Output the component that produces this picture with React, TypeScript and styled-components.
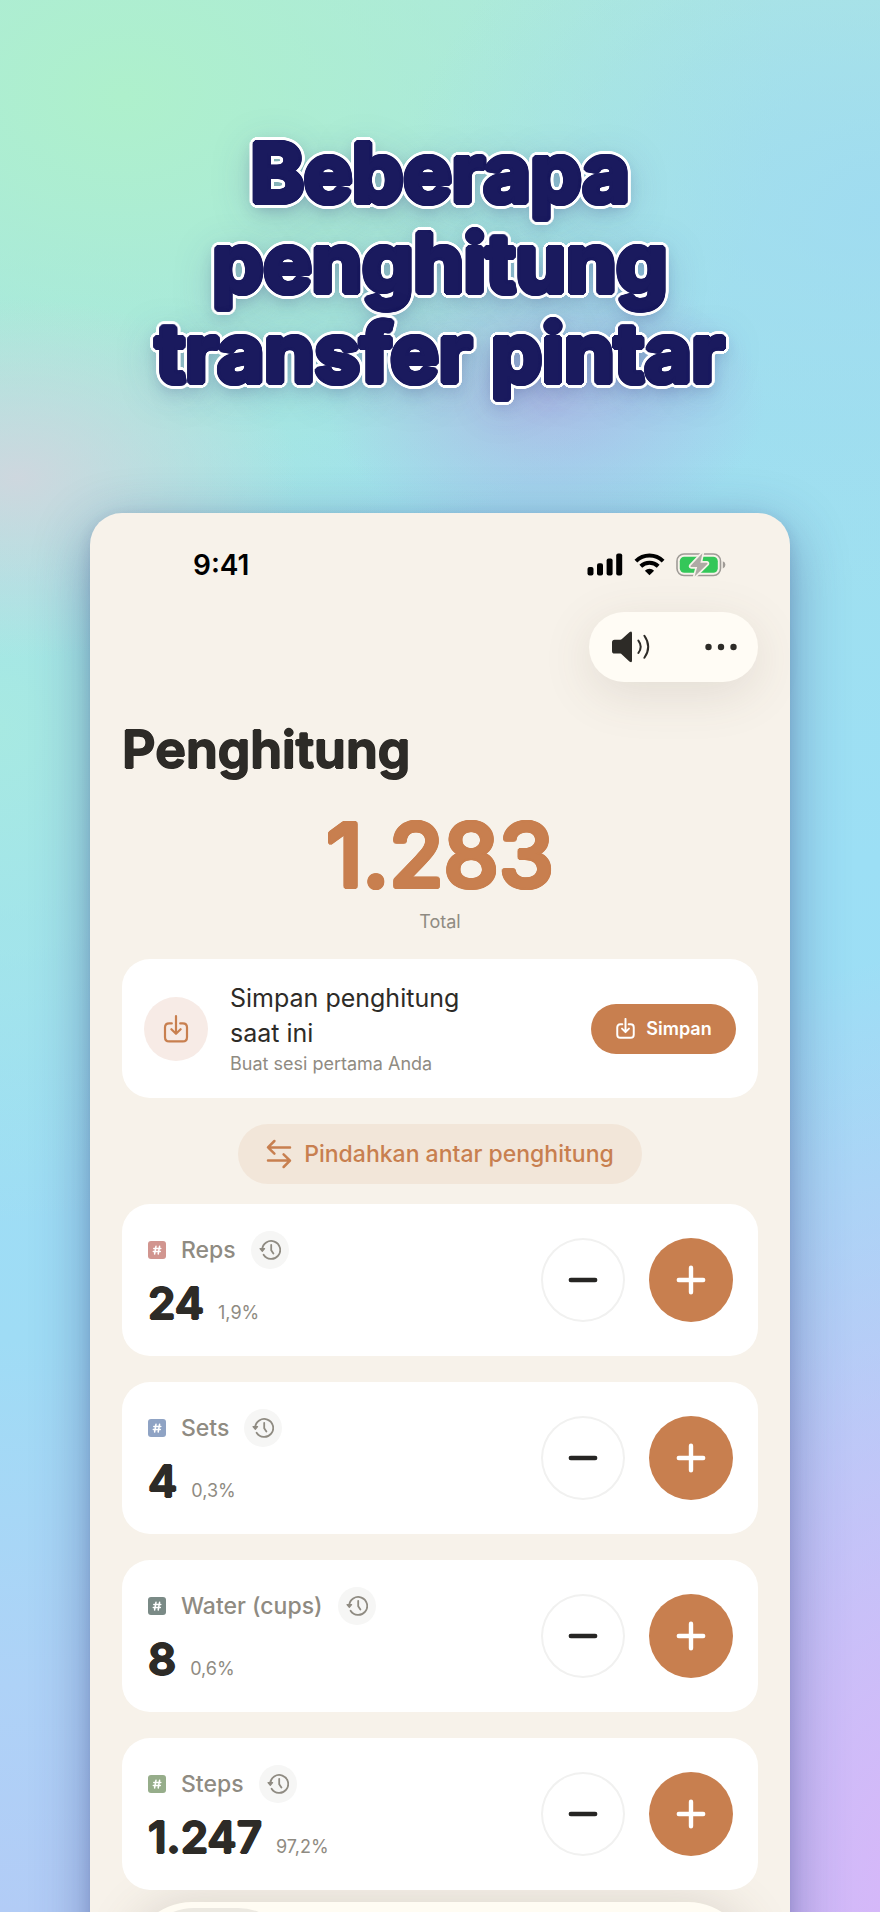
import React, { useState } from "react";
import styled, { createGlobalStyle, css } from "styled-components";

const ink = "#2d2b27";
const muted = "#8f8b82";
const accent = "#c87f4f";

/* Text shadows laid in a ring: they thicken the letters and round their ends. */
const ring = (radius: number, color: string) => {
  const points: string[] = [];
  for (let x = -radius; x <= radius; x++) {
    for (let y = -radius; y <= radius; y++) {
      const d = Math.hypot(x, y);
      if (d > radius - 1 && d < radius + 0.3) points.push(`${x}px ${y}px 0 ${color}`);
    }
  }
  return points.join(", ");
};

const GlobalStyle = createGlobalStyle`
  *, *::before, *::after { box-sizing: border-box; }
  body {
    margin: 0;
    font-family: Inter, "Liberation Sans", sans-serif;
    color: ${ink};
  }
  button { font: inherit; border: 0; padding: 0; cursor: pointer; }
  svg { display: block; }
`;

const Poster = styled.main`
  display: flex;
  flex-direction: column;
  align-items: center;
  height: 100vh;
  padding: 128px 90px 0;
  overflow: hidden;
  background:
    radial-gradient(ellipse 220px 140px at 62% 21%, rgba(176, 166, 226, 0.6), rgba(176, 166, 226, 0)),
    radial-gradient(ellipse 280px 180px at 2% 25%, rgba(208, 214, 222, 0.95), rgba(208, 214, 222, 0)),
    radial-gradient(ellipse 55% 20% at 100% 11%, rgba(158, 218, 242, 0.8), rgba(158, 218, 242, 0)),
    radial-gradient(ellipse 75% 26% at 14% 5%, #aef0cc, rgba(174, 240, 204, 0)),
    radial-gradient(ellipse 60% 50% at 105% 100%, #d8b6f9, rgba(216, 182, 249, 0)),
    radial-gradient(ellipse 50% 26% at 0% 38%, rgba(168, 234, 224, 0.9), rgba(168, 234, 224, 0)),
    linear-gradient(180deg, #ace6e2 0%, #a0e0ee 22%, #9cdff5 45%, #9fdcf5 70%, #aed2f7 88%, #b2ccf6 100%);
`;

const Headline = styled.h1`
  margin: 0;
  height: 385px;
  flex: none;
  max-width: 600px;
  text-align: center;
  font-size: 81px;
  line-height: 90px;
  font-weight: 700;
  color: #1a1a5e;
  text-shadow:
    ${ring(3, "#1a1a5e")},
    ${ring(6, "#ffffff")},
    0 6px 16px rgba(40, 40, 110, 0.35),
    0 8px 40px rgba(60, 60, 140, 0.35);
`;

const Phone = styled.section`
  flex: none;
  width: 100%;
  padding: 0 32px;
  border-radius: 32px 32px 0 0;
  background: #f7f2ea;
  box-shadow: 0 16px 56px rgba(40, 50, 120, 0.42), 0 4px 14px rgba(40, 50, 120, 0.14);
`;

const StatusBar = styled.div`
  display: flex;
  align-items: center;
  justify-content: space-between;
  height: 99px;
  padding: 4px 32px 0 71px;
  font-size: 28px;
  font-weight: 600;
  color: #000;
`;

const StatusIcons = styled.div`
  display: flex;
  align-items: center;
  gap: 11px;
`;

const Toolbar = styled.div`
  display: flex;
  justify-content: space-between;
  width: 169px;
  height: 70px;
  margin-left: auto;
  padding: 0 20px 0 22px;
  border-radius: 35px;
  background: #fffcf5;
  box-shadow: 0 12px 50px rgba(90, 80, 60, 0.13);
`;

const ToolButton = styled.button`
  display: grid;
  place-items: center;
  background: none;
  color: ${ink};
`;

const Title = styled.h2`
  margin: 32px 0 0;
  font-size: 52px;
  line-height: 72px;
  font-weight: 600;
  text-shadow: ${ring(1, ink)};
`;

const Total = styled.div`
  display: flex;
  flex-direction: column;
  align-items: center;
  gap: 4px;
  padding-top: 19px;
  height: 173px;
`;

const TotalValue = styled.strong`
  font-size: 88px;
  line-height: 100px;
  font-weight: 500;
  color: ${accent};
  text-shadow: ${ring(2, accent)};
`;

const Caption = styled.span`
  font-size: 18px;
  line-height: 26px;
  color: ${muted};
`;

const Card = styled.article`
  display: flex;
  align-items: center;
  border-radius: 28px;
  background: #fff;
`;

const SaveCard = styled(Card)`
  height: 139px;
  gap: 22px;
  padding: 0 22px;
`;

const SaveBadge = styled.div`
  display: grid;
  place-items: center;
  width: 64px;
  height: 64px;
  border-radius: 50%;
  background: #f7ebe6;
  color: ${accent};
`;

const SaveText = styled.div`
  display: flex;
  flex-direction: column;
  flex: 1;
`;

const SaveTitle = styled.span`
  max-width: 260px;
  font-size: 25px;
  line-height: 35px;
`;

const SaveButton = styled.button`
  display: flex;
  align-items: center;
  justify-content: center;
  gap: 10px;
  width: 145px;
  height: 50px;
  border-radius: 25px;
  background: ${accent};
  color: #fff;
  font-size: 18px;
  font-weight: 600;
`;

const TransferButton = styled.button`
  display: flex;
  align-items: center;
  gap: 12px;
  height: 60px;
  margin: 26px auto 20px;
  padding: 0 28px;
  border-radius: 30px;
  background: #f2e6d9;
  color: ${accent};
  font-size: 23px;
  font-weight: 500;
`;

const CounterList = styled.div`
  display: flex;
  flex-direction: column;
  gap: 26px;
`;

const CounterCard = styled(Card)`
  height: 152px;
  padding: 0 25px 0 26px;
  gap: 24px;
`;

const CounterInfo = styled.div`
  flex: 1;
`;

const CounterHead = styled.div`
  display: flex;
  align-items: center;
  gap: 15px;
  height: 38px;
  font-size: 23px;
  font-weight: 500;
  color: ${muted};
`;

const HistoryButton = styled.button`
  display: grid;
  place-items: center;
  width: 38px;
  height: 38px;
  border-radius: 50%;
  background: #f6f6f5;
  color: ${muted};
`;

const CounterFigures = styled.div`
  display: flex;
  align-items: baseline;
  gap: 14px;
  margin-top: 8px;
`;

const CounterValue = styled.strong`
  font-size: 44px;
  line-height: 52px;
  font-weight: 600;
  text-shadow: ${ring(1, ink)};
`;

const roundButton = css`
  display: grid;
  place-items: center;
  width: 84px;
  height: 84px;
  border-radius: 50%;
`;

const MinusButton = styled.button`
  ${roundButton}
  background: #fff;
  color: #262523;
  box-shadow: inset 0 0 0 2px #f1f1f0;
`;

const PlusButton = styled.button`
  ${roundButton}
  background: ${accent};
  color: #fff;
`;

const TabBar = styled.nav`
  display: flex;
  height: 124px;
  margin: 12px 8px 0;
  padding: 6px 8px;
  border-radius: 62px;
  background: #fffcf3;
  box-shadow: 0 0 50px rgba(90, 80, 60, 0.18);
`;

const SelectedTab = styled.button`
  width: 156px;
  height: 112px;
  border-radius: 56px;
  background: #ece9e1;
`;

const TrayIcon = ({ size, weight }: { size: number; weight: number }) => (
  <svg width={size} height={size} viewBox="0 0 28 28" fill="none" stroke="currentColor" strokeWidth={weight} strokeLinecap="round" strokeLinejoin="round" aria-hidden="true">
    <path d="M9.8 8.4H7.2Q3 8.4 3 12.6V22.2Q3 26.4 7.2 26.4H20.8Q25 26.4 25 22.2V12.6Q25 8.4 20.8 8.4H18.2" />
    <path d="M14 1.2V18.4M9.4 14.2L14 18.8L18.6 14.2" />
  </svg>
);

const SignalIcon = () => (
  <svg width="36" height="23" viewBox="0 0 36 23" fill="currentColor" aria-hidden="true">
    <rect x="0.5" y="14" width="6" height="8.5" rx="2" />
    <rect x="10" y="10.2" width="6" height="12.3" rx="2" />
    <rect x="19.6" y="5.6" width="6" height="16.9" rx="2" />
    <rect x="29.2" y="0.5" width="6" height="22" rx="2" />
  </svg>
);

const WifiIcon = () => (
  <svg width="31" height="23" viewBox="0 0 31 23" fill="none" stroke="currentColor" strokeWidth="4" aria-hidden="true">
    <path d="M1.9 8.1A19.4 19.4 0 0 1 29.1 8.1" />
    <path d="M6.8 13.2A12.4 12.4 0 0 1 24.2 13.2" />
    <path d="M15.5 22.2L10.9 17.7A6.5 6.5 0 0 1 20.1 17.7Z" fill="currentColor" stroke="none" />
  </svg>
);

const BatteryIcon = () => (
  <svg width="50" height="24" viewBox="0 0 50 24" aria-hidden="true">
    <rect x="1" y="1" width="43.5" height="21.5" rx="7" fill="none" stroke="#9f9b96" strokeWidth="1.6" />
    <path d="M46.8 8.2Q49.4 9 49.4 11.8Q49.4 14.6 46.8 15.4Z" fill="#9f9b96" />
    <rect x="3.8" y="3.8" width="38" height="16" rx="4.5" fill="#34c759" />
    <path d="M26.4 0.2L14.6 12.7Q14 13.9 15.4 14H21.2L18.6 23.6L31.4 11.1Q32 9.9 30.6 9.8H24.4Z" fill="#aeaaa5" stroke="#f7f2ea" strokeWidth="3.4" strokeLinejoin="round" paintOrder="stroke" />
  </svg>
);

const SpeakerIcon = () => (
  <svg width="40" height="32" viewBox="0 0 40 32" aria-hidden="true">
    <path d="M1 11.5Q1 8.8 3.6 8.8H9.2Q10.2 8.8 10.9 8L18.4 1.2Q21 -0.6 21 2.2V29.4Q21 32.4 18.4 30.4L10.9 23.4Q10.2 22.6 9.2 22.6H3.6Q1 22.6 1 20Z" fill="currentColor" />
    <path d="M27.4 9.6Q32 15.7 27.4 22M33.4 4.8Q41 15.7 33.4 26.8" fill="none" stroke="currentColor" strokeWidth="2" strokeLinecap="round" />
  </svg>
);

const MoreIcon = () => (
  <svg width="34" height="8" viewBox="0 0 34 8" fill="currentColor" aria-hidden="true">
    <circle cx="4.5" cy="4" r="3.2" />
    <circle cx="17" cy="4" r="3.2" />
    <circle cx="29.5" cy="4" r="3.2" />
  </svg>
);

const SwapIcon = () => (
  <svg width="26" height="30" viewBox="0 0 26 30" fill="none" stroke="currentColor" strokeWidth="2.5" strokeLinecap="round" strokeLinejoin="round" aria-hidden="true">
    <path d="M24 8.4H2.2M8.4 2L2 8.4L8.4 14.6" />
    <path d="M2 21.6H23.8M17.6 15.4L24 21.6L17.6 28" />
  </svg>
);

const HashIcon = ({ color }: { color: string }) => (
  <svg width="18" height="18" viewBox="0 0 18 18" aria-hidden="true">
    <rect width="18" height="18" rx="3" fill={color} />
    <path d="M8 5.2L6.6 13M11.6 5.2L10.2 13M5.8 7.6H12.8M5.3 10.6H12.3" stroke="#fff" strokeWidth="1.5" strokeLinecap="round" />
  </svg>
);

const HistoryIcon = () => (
  <svg width="22" height="22" viewBox="0 0 22 22" fill="none" stroke="currentColor" strokeWidth="1.8" strokeLinecap="round" strokeLinejoin="round" aria-hidden="true">
    <path d="M3.2 10.6A9 9 0 1 1 4.6 15.8" />
    <path d="M12.2 5.8V11.2L14.4 14.6" />
    <path d="M1 9.6H5.6L3.3 12.4Z" fill="currentColor" strokeWidth="1.2" />
  </svg>
);

const StepIcon = ({ plus }: { plus?: boolean }) => (
  <svg width="30" height="30" viewBox="0 0 30 30" stroke="currentColor" strokeWidth="4.4" strokeLinecap="round" aria-hidden="true">
    <path d={plus ? "M2.8 15H27.2M15 2.8V27.2" : "M2.8 15H27.2"} />
  </svg>
);

const counters = [
  { name: "Reps", value: 24, share: "1,9%", color: "#d1958f" },
  { name: "Sets", value: 4, share: "0,3%", color: "#8fa3c4" },
  { name: "Water (cups)", value: 8, share: "0,6%", color: "#7a8a86" },
  { name: "Steps", value: 1247, share: "97,2%", color: "#96ad8a" },
];

const grouped = (n: number) => String(n).replace(/\B(?=(\d{3})+$)/g, ".");

export default function App() {
  const [values, setValues] = useState(counters.map((c) => c.value));
  const change = (index: number, step: number) =>
    setValues((old) => old.map((v, i) => (i === index ? Math.max(0, v + step) : v)));
  const total = values.reduce((sum, v) => sum + v, 0);

  return (
    <>
      <GlobalStyle />
      <Poster>
        <Headline>Beberapa penghitung transfer pintar</Headline>
        <Phone>
          <StatusBar>
            <span>9:41</span>
            <StatusIcons>
              <SignalIcon />
              <WifiIcon />
              <BatteryIcon />
            </StatusIcons>
          </StatusBar>
          <Toolbar>
            <ToolButton aria-label="Suara"><SpeakerIcon /></ToolButton>
            <ToolButton aria-label="Lainnya"><MoreIcon /></ToolButton>
          </Toolbar>
          <Title>Penghitung</Title>
          <Total>
            <TotalValue>{grouped(total)}</TotalValue>
            <Caption>Total</Caption>
          </Total>
          <SaveCard>
            <SaveBadge><TrayIcon size={28} weight={2.2} /></SaveBadge>
            <SaveText>
              <SaveTitle>Simpan penghitung saat ini</SaveTitle>
              <Caption>Buat sesi pertama Anda</Caption>
            </SaveText>
            <SaveButton><TrayIcon size={21} weight={2.6} />Simpan</SaveButton>
          </SaveCard>
          <TransferButton><SwapIcon />Pindahkan antar penghitung</TransferButton>
          <CounterList>
            {counters.map((c, i) => (
              <CounterCard key={c.name}>
                <CounterInfo>
                  <CounterHead>
                    <HashIcon color={c.color} />
                    <span>{c.name}</span>
                    <HistoryButton aria-label={`Riwayat ${c.name}`}><HistoryIcon /></HistoryButton>
                  </CounterHead>
                  <CounterFigures>
                    <CounterValue>{grouped(values[i])}</CounterValue>
                    <Caption>{c.share}</Caption>
                  </CounterFigures>
                </CounterInfo>
                <MinusButton aria-label={`Kurangi ${c.name}`} onClick={() => change(i, -1)}><StepIcon /></MinusButton>
                <PlusButton aria-label={`Tambah ${c.name}`} onClick={() => change(i, 1)}><StepIcon plus /></PlusButton>
              </CounterCard>
            ))}
          </CounterList>
          <TabBar>
            <SelectedTab aria-label="Penghitung" />
          </TabBar>
        </Phone>
      </Poster>
    </>
  );
}
